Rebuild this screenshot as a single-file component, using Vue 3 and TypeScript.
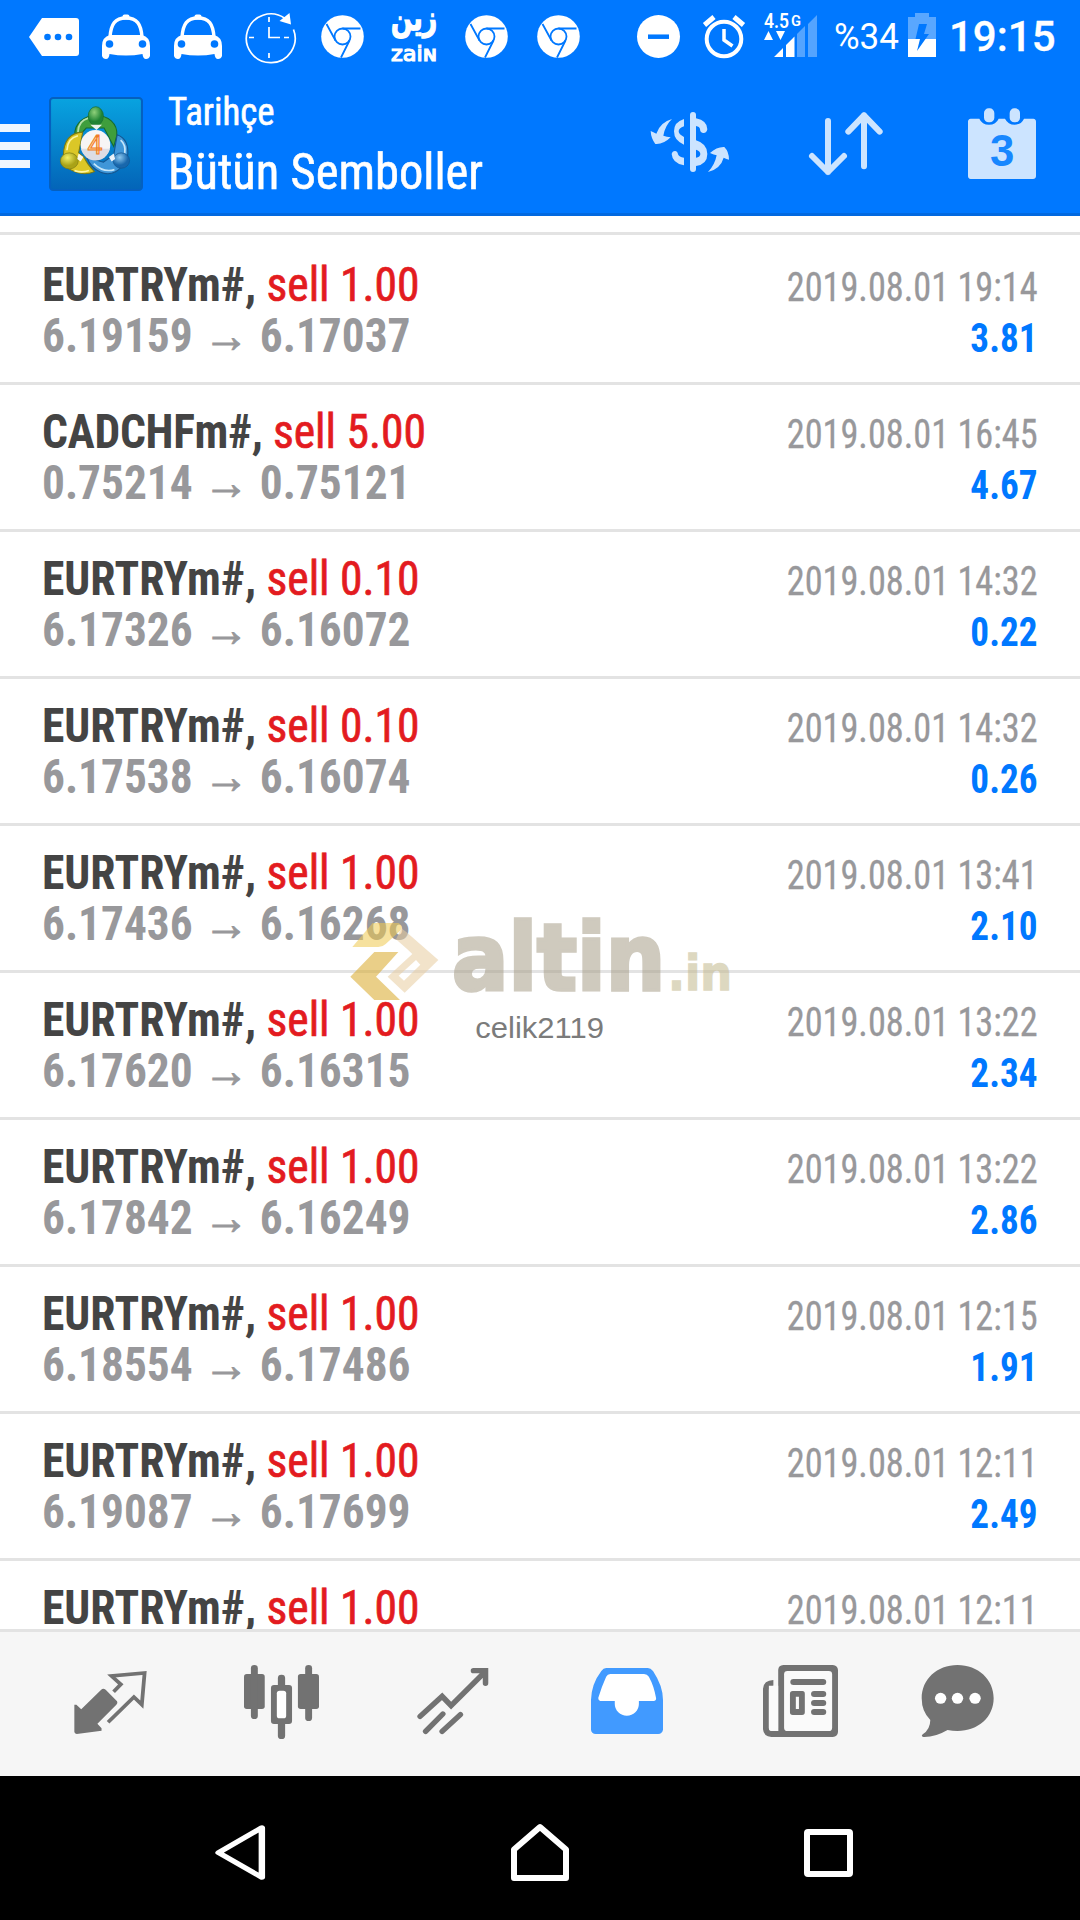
<script setup lang="ts">
interface Deal {
  symbol: string
  volume: string
  open: string
  close: string
  time: string
  profit: string
}

const deals: Deal[] = [
  { symbol: 'EURTRYm#', volume: '1.00', open: '6.19159', close: '6.17037', time: '2019.08.01 19:14', profit: '3.81' },
  { symbol: 'CADCHFm#', volume: '5.00', open: '0.75214', close: '0.75121', time: '2019.08.01 16:45', profit: '4.67' },
  { symbol: 'EURTRYm#', volume: '0.10', open: '6.17326', close: '6.16072', time: '2019.08.01 14:32', profit: '0.22' },
  { symbol: 'EURTRYm#', volume: '0.10', open: '6.17538', close: '6.16074', time: '2019.08.01 14:32', profit: '0.26' },
  { symbol: 'EURTRYm#', volume: '1.00', open: '6.17436', close: '6.16268', time: '2019.08.01 13:41', profit: '2.10' },
  { symbol: 'EURTRYm#', volume: '1.00', open: '6.17620', close: '6.16315', time: '2019.08.01 13:22', profit: '2.34' },
  { symbol: 'EURTRYm#', volume: '1.00', open: '6.17842', close: '6.16249', time: '2019.08.01 13:22', profit: '2.86' },
  { symbol: 'EURTRYm#', volume: '1.00', open: '6.18554', close: '6.17486', time: '2019.08.01 12:15', profit: '1.91' },
  { symbol: 'EURTRYm#', volume: '1.00', open: '6.19087', close: '6.17699', time: '2019.08.01 12:11', profit: '2.49' },
  { symbol: 'EURTRYm#', volume: '1.00', open: '', close: '', time: '2019.08.01 12:11', profit: '' },
]

const notifications: string[] = ['tag', 'car', 'car', 'clock', 'chrome', 'zain', 'chrome', 'chrome']
</script>

<template>
  <div class="screen">
    <div class="status">
      <div class="notes">
        <div v-for="(n, i) in notifications" :key="i" class="slot">
          <svg v-if="n === 'tag'" width="50" height="38" viewBox="0 0 50 38">
            <path d="M13 0H47Q50 0 50 3V35Q50 38 47 38H13L0 19Z" fill="#fff" />
            <g fill="#0078ff"><circle cx="18.5" cy="19" r="3.3" /><circle cx="29" cy="19" r="3.3" /><circle cx="40" cy="19" r="3.3" /></g>
          </svg>
          <svg v-else-if="n === 'car'" width="50" height="46" viewBox="0 0 50 46">
            <path d="M9 23C10 10 14 4 25 4S40 10 41 23" fill="none" stroke="#fff" stroke-width="3.4" />
            <rect x="21.500" y="0.500" width="7" height="5" rx="2" fill="#fff" />
            <path d="M9 21H41Q49 23 49 32V42Q48 45 45 45Q42 45 41.500 40Q25 43 8.500 40Q8 45 5 45Q2 45 1 42V32Q1 23 9 21Z" fill="#fff" />
            <circle cx="8.500" cy="30" r="3.800" fill="#0078ff" /><circle cx="41.500" cy="30" r="3.800" fill="#0078ff" />
          </svg>
          <svg v-else-if="n === 'clock'" class="clock" width="52" height="52" viewBox="0 0 52 52" fill="none" stroke="#fff" stroke-width="1.700">
            <path d="M42 7.500A24.400 24.400 0 1 0 50.500 18.500" />
            <path d="M26 16V26.500H37M26 6V11M26 42V47M6 26.500H11M41 26.500H46" />
            <path d="M46.500 2L36.500 10L48 13.500Z" fill="#fff" stroke="none" />
          </svg>
          <svg v-else-if="n === 'chrome'" width="43" height="43" viewBox="0 0 43 43">
            <circle cx="21.500" cy="21.500" r="21.300" fill="#fff" />
            <circle cx="21.500" cy="21.500" r="8" fill="none" stroke="#0078ff" stroke-width="1.800" />
            <path d="M21.500 13.500L39.500 13.500M14.500 25.500L5.500 9M28.500 25.500L20 42.500" stroke="#0078ff" stroke-width="1.800" />
          </svg>
          <svg v-else width="48" height="54" viewBox="0 0 48 54" fill="#fff">
            <text x="1" y="20" class="arabic" textLength="46" lengthAdjust="spacingAndGlyphs">زين</text>
            <text x="1" y="50.500" class="zain" textLength="46" lengthAdjust="spacingAndGlyphs">zaiɴ</text>
          </svg>
        </div>
      </div>
      <svg class="dnd" width="43" height="43" viewBox="0 0 43 43"><circle cx="21.500" cy="21.500" r="21.500" fill="#fff" /><path d="M11 21.700H32" stroke="#0078ff" stroke-width="4.500" /></svg>
      <svg class="alarm" width="42" height="44" viewBox="0 0 42 44" fill="none" stroke="#fff">
        <circle cx="21" cy="24" r="17.300" stroke-width="4" /><path d="M21 14V25L29.500 31" stroke-width="3.500" /><path d="M1.500 10L11 2M40.500 10L31 2" stroke-width="5" />
      </svg>
      <svg class="signal" width="54" height="46" viewBox="0 0 54 46" fill="#fff">
        <text x="0" y="15" class="net" textLength="25" lengthAdjust="spacingAndGlyphs">4.5</text>
        <text x="27" y="12.500" class="netg" textLength="10" lengthAdjust="spacingAndGlyphs">G</text>
        <path d="M0 27L4.500 18L9 27ZM12 18H21L16.500 27Z" />
        <path d="M10 44L19 35V44ZM22 32L30.500 23.500V44H22Z" />
        <path d="M33 21L41 13V44H33ZM44 11L53 2V44H44Z" opacity=".33" />
      </svg>
      <span class="pct">%34</span>
      <svg class="batt" width="28" height="44" viewBox="0 0 28 44">
        <path d="M0 4H7V0H21V4H28V26H0Z" fill="#fff" opacity=".35" /><path d="M0 26H28V44H0Z" fill="#fff" /><path d="M11 11H19L16 21H21L9 38L12 26H7.500Z" fill="#0078ff" />
      </svg>
      <span class="time">19:15</span>
    </div>

    <header class="bar">
      <div class="burger"><i /><i /><i /></div>
      <svg class="logo" width="94" height="94" viewBox="142 67 273 281" preserveAspectRatio="none">
        <defs>
          <linearGradient id="bg" x1="0" y1="0" x2="0" y2="1"><stop offset="0" stop-color="#08a3e0" /><stop offset="1" stop-color="#0364b8" /></linearGradient>
          <radialGradient id="gr" cx=".4" cy=".3"><stop offset="0" stop-color="#8fd07a" /><stop offset="1" stop-color="#1f8434" /></radialGradient>
          <radialGradient id="ye" cx=".4" cy=".3"><stop offset="0" stop-color="#f3ef66" /><stop offset="1" stop-color="#a9a217" /></radialGradient>
          <radialGradient id="bl" cx=".4" cy=".3"><stop offset="0" stop-color="#8cc8ef" /><stop offset="1" stop-color="#1867ac" /></radialGradient>
        </defs>
        <rect x="145" y="70" width="267" height="275" rx="9" fill="url(#bg)" stroke="#0560bf" stroke-width="6" />
        <path d="M217 180C216 145 245 122 279 122S342 145 339 182L330 215L302 160H250L234 178Z" fill="#3f9e3c" stroke="#176b2c" stroke-width="3" />
        <path d="M226 172C227 148 240 134 256 130" fill="none" stroke="#b5dfa8" stroke-width="5" />
        <path d="M340 180C366 190 374 215 370 246C352 290 322 305 292 292Q264 280 252 248L300 262L330 240Z" fill="#3f96d8" stroke="#14558f" stroke-width="3" />
        <path d="M350 196Q366 210 362 236M272 266Q300 294 332 284" fill="none" stroke="#c5e6fa" stroke-width="5" />
        <path d="M240 172C205 174 185 194 184 240L200 282Q240 306 274 290Q254 270 244 248L228 234Z" fill="#dbc727" stroke="#7c7a12" stroke-width="3" />
        <path d="M194 226Q196 190 226 183M216 287Q238 295 258 287" fill="none" stroke="#fbf5a4" stroke-width="5" />
        <ellipse cx="278" cy="124" rx="22" ry="28" fill="url(#gr)" stroke="#176b2c" stroke-width="2" />
        <ellipse cx="201" cy="258" rx="26" ry="24" fill="url(#ye)" stroke="#7c7a12" stroke-width="2" /><ellipse cx="352" cy="257" rx="24" ry="23" fill="url(#bl)" stroke="#14558f" stroke-width="2" />
        <path d="M228 236l14 10-8 14-10-8zM330 236l-14 10 8 14 10-8zM262 150h34l-16 16z" fill="#fff" opacity=".9" />
        <ellipse cx="277" cy="210" rx="43" ry="44" fill="#f7f5f5" />
        <path d="M235 222A43 44 0 0 0 319 222Z" fill="#dcdde4" />
        <text x="254" y="237" class="four" textLength="43" lengthAdjust="spacingAndGlyphs">4</text>
      </svg>
      <div class="titles">
        <div class="t1">Tarihçe</div>
        <div class="t2">Bütün Semboller</div>
      </div>
      <svg class="money" width="80" height="62" viewBox="150 108 240 186" fill="#cce4ff">
        <path d="M279 120V282" stroke="#cce4ff" stroke-width="18" stroke-linecap="round" />
        <path d="M252 132V154Q236 160 236 169T252 186V209Q222 197 222 169T252 132Z" />
        <path d="M288 130Q322 137 322 163Q320 175 309 174Q300 172 300 162Q299 155 288 153Z" />
        <path d="M288 196Q322 206 322 237T288 273V248Q301 246 301 237T288 224Z" />
        <path d="M252 271Q217 265 215 237Q217 228 225 228Q233 229 234 238Q237 247 252 248Z" />
        <path d="M216 132Q180 142 169 176Q160 172 152 168Q153 190 166 207Q190 209 212 187Q200 186 190 182Q196 150 216 132ZM324 291Q362 281 371 248Q380 252 387 254Q387 230 373 216Q350 215 330 234Q342 239 350 241Q344 271 324 291Z" />
      </svg>
      <svg class="sort" width="76" height="66" viewBox="624 107 228 198" fill="none" stroke="#cce4ff" stroke-width="18" stroke-linecap="round" stroke-linejoin="round">
        <path d="M684 137V290M636 242L684 290L732 242M792 273V120M745 169L792 120L839 169" />
      </svg>
      <svg class="cal" width="70" height="74" viewBox="1101 94 210 222">
        <path d="M1112 129H1138Q1146 147 1167 147T1196 129H1215Q1224 147 1244 147T1272 129H1300Q1308 130 1308 138V302Q1307 310 1299 310H1112Q1104 309 1104 301V138Q1104 130 1112 129Z" fill="#cce4ff" />
        <rect x="1152" y="98" width="31" height="42" rx="14" fill="#cce4ff" /><rect x="1229" y="98" width="31" height="42" rx="14" fill="#cce4ff" />
        <text x="1170" y="271" class="three" textLength="73" lengthAdjust="spacingAndGlyphs">3</text>
      </svg>
    </header>

    <main class="list">
      <div v-for="(d, i) in deals" :key="i" class="row">
        <div class="left">
          <div class="l1"><b :class="{ tight: d.symbol === 'CADCHFm#' }">{{ d.symbol }},</b> <span class="sell">sell {{ d.volume }}</span></div>
          <div v-if="d.open" class="l2"><span>{{ d.open }}</span><span class="arrow">→</span><span>{{ d.close }}</span></div>
        </div>
        <div class="right">
          <div class="date">{{ d.time }}</div>
          <div v-if="d.profit" class="profit">{{ d.profit }}</div>
        </div>
      </div>
      <svg class="mark" width="440" height="180" viewBox="0 0 1320 540">
        <g opacity=".55">
          <path d="M97 201L158 129H236Q249 138 243 150L197 192Q188 201 175 201Z" fill="#f0ca50" />
          <path d="M91 290L163 216H235L168 290L240 360H163Z" fill="#d9a928" />
          <path fill-rule="evenodd" d="M244 145L258 155L355 240L254 338L203 290L277 222L262 208L228 178ZM288 240L236 287L252 302L301 254Z" fill="#e8cda0" />
          <text x="396" y="329" class="altin" textLength="640" lengthAdjust="spacingAndGlyphs">altin</text>
          <text x="1044" y="330" class="in" textLength="192" lengthAdjust="spacingAndGlyphs">.in</text>
        </g>
        <text x="466" y="473" class="user" textLength="386" lengthAdjust="spacingAndGlyphs">celik2119</text>
      </svg>
    </main>

    <nav class="tabs">
      <svg class="trade" width="73" height="76" viewBox="214 315 212 228" preserveAspectRatio="none">
        <path d="M293 389Q299 384 306 389L339 424Q342 429 337 434L282 491L294 505V512L222 522Q215 521 215 515V434H221L235 448Z" fill="#727272" />
        <path d="M329 395L350 373L323 348L419 339L411 434L388 411L313 487" fill="none" stroke="#727272" stroke-width="11" />
      </svg>
      <svg class="chart" width="75" height="76" viewBox="709 315 217 228" preserveAspectRatio="none" fill="#727272">
        <rect x="709" y="342" width="60" height="105" rx="8" /><rect x="729" y="315" width="20" height="162" rx="10" />
        <rect x="865" y="342" width="61" height="105" rx="8" /><rect x="886" y="315" width="20" height="168" rx="10" />
        <rect x="807" y="344" width="21" height="50" rx="10" /><rect x="807" y="475" width="21" height="62" rx="10" />
        <rect x="787" y="375" width="61" height="117" rx="9" /><rect x="804" y="392" width="27" height="83" rx="8" fill="#fff" />
      </svg>
      <svg class="trend" width="73" height="76" viewBox="1212 315 212 228" preserveAspectRatio="none" fill="none" stroke="#727272" stroke-width="16" stroke-linecap="round">
        <path d="M1221 469L1285 409L1311 437L1408 337M1376 332H1411V370" />
        <path d="M1237 514L1287 462M1285 514L1338 464" />
      </svg>
      <svg class="inbox" width="72" height="76" viewBox="148 315 209 228" preserveAspectRatio="none">
        <path d="M192 324H313Q321 324 328 333Q357 378 357 420V509Q355 521 343 522H162Q149 521 148 509V420Q149 372 178 333Q184 324 192 324Z" fill="#419aff" />
        <path d="M204 342H302Q311 342 316 350Q331 378 337 415Q337 423 330 423H287V432A35 35 0 0 1 217 432V423H175Q169 422 169 414Q178 382 192 350Q196 342 204 342Z" fill="#fff" />
      </svg>
      <svg class="news" width="75" height="76" viewBox="648 315 217 228" preserveAspectRatio="none">
        <path d="M678 360V377Q665 378 665 389V504Q665 513 674 513H692V329Q693 316 707 315H850Q864 316 865 330V516Q864 530 850 531H672Q650 530 648 508V386Q650 361 678 360Z" fill="#727272" />
        <path d="M665 377H692V513H674Q665 513 665 504Z" fill="#fafafa" /><rect x="709" y="333" width="139" height="180" rx="10" fill="#fafafa" />
        <g fill="#727272"><rect x="727" y="357" width="104" height="18" rx="9" /><path fill-rule="evenodd" d="M734 393H762Q769 393 769 401V457Q769 465 761 465H734Q726 465 726 457V401Q726 393 734 393ZM743 410V447H752V410Z" /><rect x="787" y="393" width="44" height="18" rx="9" /><rect x="787" y="420" width="44" height="18" rx="9" /><rect x="787" y="447" width="44" height="18" rx="9" /></g>
      </svg>
      <svg class="chat" width="73" height="76" viewBox="1107 315 212 228" preserveAspectRatio="none">
        <path d="M1213 315C1273 315 1318 358 1318 415S1273 513 1213 513Q1199 513 1184 510Q1148 532 1114 531Q1106 529 1112 523Q1134 508 1134 480Q1109 455 1109 415C1109 358 1153 315 1213 315Z" fill="#727272" />
        <g fill="#fff"><circle cx="1164" cy="415" r="16.500" /><circle cx="1213" cy="415" r="16.500" /><circle cx="1264" cy="415" r="16.500" /></g>
      </svg>
    </nav>

    <footer class="nav">
      <svg class="back" width="52" height="58" viewBox="74 133 113 174" preserveAspectRatio="none" fill="none" stroke="#fff" stroke-width="14" stroke-linejoin="round"><path d="M178 144V293L84 219Z" /></svg>
      <svg class="home" width="60" height="60" viewBox="0 0 60 60" fill="none" stroke="#fff" stroke-width="6" stroke-linejoin="round"><path d="M4 55V26.500L30 4L56 26.500V55Z" /></svg>
      <svg class="recent" width="50" height="50" viewBox="0 0 50 50" fill="none" stroke="#fff" stroke-width="6"><rect x="4" y="4" width="43" height="42" rx="1" /></svg>
    </footer>
  </div>
</template>

<style>
body { margin: 0; background: #fff; }
</style>

<style scoped>
.screen { width: 1080px; height: 1920px; display: flex; flex-direction: column; overflow: hidden; background: #fff; font-family: 'Roboto Condensed', Roboto, sans-serif; font-stretch: 75%; }
svg { display: block; flex: none; overflow: visible; }
.status { height: 73px; flex: none; background: #0078ff; display: flex; align-items: center; color: #fff; font-family: Roboto, sans-serif; font-stretch: 100%; white-space: nowrap; }
.notes { display: flex; padding-left: 18px; width: 576px; }
.slot { width: 72px; display: flex; justify-content: center; align-items: center; }
.clock { margin-right: 3px; }
.arabic { font: bold 34px 'DejaVu Sans', sans-serif; stroke: #fff; stroke-width: 1.4px; }
.zain { font: 500 21px 'DejaVu Sans', sans-serif; stroke: #fff; stroke-width: 1.2px; }
.dnd { margin-left: 43px; }
.alarm { margin-left: 23px; }
.signal { margin-left: 19px; margin-top: -2px; }
.net { font: 600 20px Roboto, sans-serif; }
.netg { font: 600 15px Roboto, sans-serif; }
.pct { margin-left: 16px; width: 66px; font-size: 37px; line-height: 44px; transform: scaleX(.945); transform-origin: left; }
.batt { margin-left: 8px; margin-top: -3px; }
.time { margin-left: 13px; font-size: 42px; font-weight: 500; line-height: 44px; -webkit-text-stroke: .3px #fff; }
.bar { height: 140px; flex: none; background: #0078ff; border-bottom: 3px solid #0269e0; display: flex; align-items: flex-start; }
.burger { width: 30px; padding-top: 51px; display: flex; flex-direction: column; gap: 10px; }
.burger i { height: 8px; background: #eff6ff; }
.logo { margin: 24px 0 0 19px; }
.four { font: 76px Roboto, sans-serif; fill: #ffd49a; stroke: #ef7c28; stroke-width: 3px; }
.titles { margin-left: 25px; width: 482px; color: #fff; white-space: nowrap; padding-top: 15px; -webkit-text-stroke: .6px #fff; }
.t1 { font-size: 39px; line-height: 48px; transform: scaleX(.945); transform-origin: left; }
.t2 { font-size: 50px; line-height: 66px; margin-top: 3px; transform: scaleX(.971); transform-origin: left; }
.money { margin-top: 38px; }
.sort { margin: 38px 0 0 78px; }
.cal { margin: 34px 0 0 83px; }
.three { font: bold 134px 'Liberation Sans', sans-serif; fill: #1787ff; }
.list { height: 1413px; flex: none; box-sizing: border-box; padding-top: 16px; position: relative; overflow: hidden; }
.row { height: 144px; border-top: 3px solid #e3e3e3; display: flex; justify-content: space-between; padding: 0 42px; }
.row:first-child { padding-top: 3px; }
.left { padding-top: 21px; font-size: 48px; line-height: 51px; color: #444; white-space: nowrap; }
.l1 { transform: scaleX(.949); transform-origin: left; }
.tight { letter-spacing: -.35px; }
.sell { color: #e31b20; -webkit-text-stroke: .7px #e31b20; }
.l2 { color: #98989b; font-weight: 700; display: flex; transform: scaleX(.945); transform-origin: left; }
.arrow { font: 400 48px/51px 'Liberation Sans', sans-serif; width: 71px; display: flex; justify-content: center; height: 51px; -webkit-text-stroke: 1px #98989b; }
.right { padding-top: 24px; font-size: 40px; line-height: 51px; color: #98989b; text-align: right; white-space: nowrap; }
.date { transform: scaleX(.907); transform-origin: right; -webkit-text-stroke: .3px #98989b; }
.profit { color: #0078ff; font-weight: 700; transform: scaleX(.93); transform-origin: right; }
.mark { position: absolute; left: 320px; top: 664px; }
.altin { font: bold 278px 'DejaVu Sans', sans-serif; fill: #a89f8a; stroke: #a89f8a; stroke-width: 11px; }
.in { font: bold 146px 'DejaVu Sans', sans-serif; fill: #c3b98e; stroke: #c3b98e; stroke-width: 4px; }
.user { font: 90px 'Liberation Sans', sans-serif; fill: #7b7b7b; }
.tabs { height: 144px; flex: none; border-top: 3px solid #e3e3e3; background: #f6f6f6; display: flex; }
.tabs svg { margin-top: 33px; }
.trade { margin-left: 74px; }
.chart { margin-left: 97px; }
.trend { margin-left: 98px; }
.inbox { margin-left: 101px; }
.news { margin-left: 100px; }
.chat { margin-left: 83px; }
.nav { height: 144px; flex: none; box-sizing: border-box; padding-top: 9px; background: #000; display: flex; align-items: center; }
.back { margin-left: 214px; }
.home { margin-left: 244px; }
.recent { margin-left: 233px; }
</style>
